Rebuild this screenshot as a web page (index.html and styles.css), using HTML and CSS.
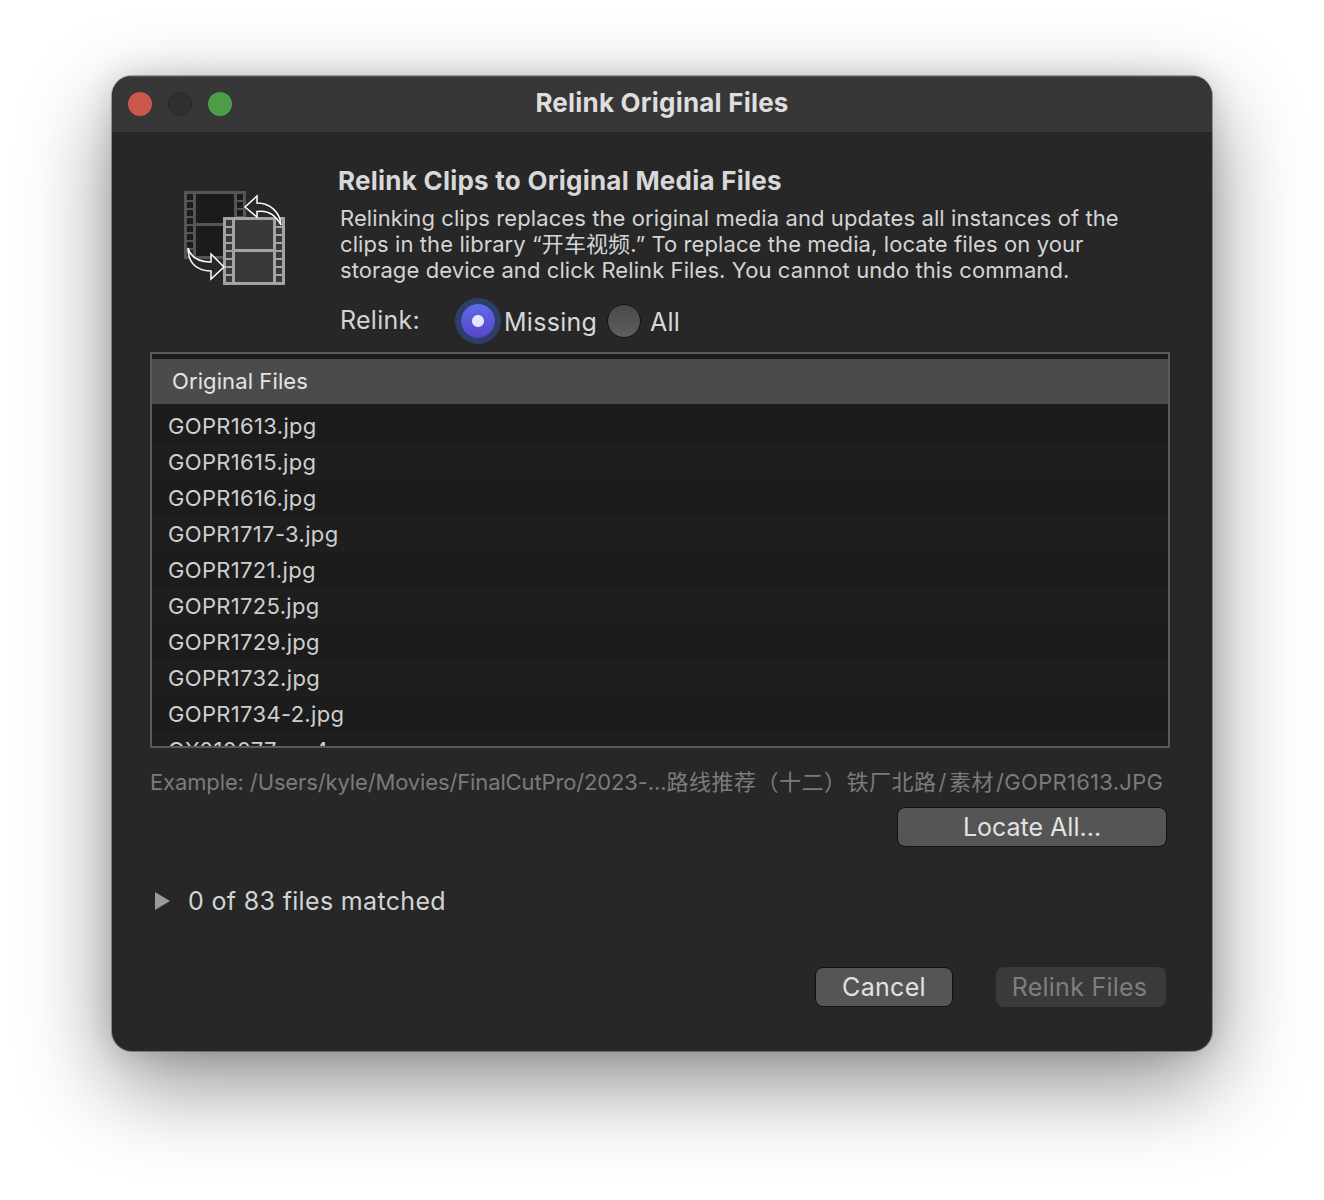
FILE: index.html
```html
<!DOCTYPE html>
<html lang="en">
<head>
  <meta charset="UTF-8" />
  <title>Relink Original Files</title>
  <link rel="stylesheet" href="styles.css">
</head>
<body>
  <div class="window">
    <header class="titlebar">
      <div class="lights">
        <span class="light red"></span>
        <span class="light off"></span>
        <span class="light green"></span>
      </div>
      <h1>Relink Original Files</h1>
    </header>

    <main class="content">
      <section class="intro">
        <svg class="film-icon" width="110" height="100" viewBox="0 0 110 100" fill="none">
          <!-- back strip -->
          <rect x="5.500" y="4.500" width="59" height="65" fill="#1b1b1b" stroke="#555" stroke-width="3"/>
          <path d="M14.500 4v66M55.500 4v66M16 36.500h38" stroke="#555" stroke-width="3"/>
          <path d="M7 13h6M7 21h6M7 29h6M7 37h6M7 45h6M7 53h6M7 61h6M57 13h6M57 21h6M57 29h6M57 37h6" stroke="#555" stroke-width="2"/>
          <!-- front strip -->
          <rect x="44.500" y="30.500" width="59" height="65" fill="#393939" stroke="#a3a3a3" stroke-width="3"/>
          <path d="M53.500 30v66M94.500 30v66M55 62.500h38" stroke="#a3a3a3" stroke-width="3"/>
          <path d="M46 39h6M46 47h6M46 55h6M46 63h6M46 71h6M46 79h6M46 87h6M96 39h6M96 47h6M96 55h6M96 63h6M96 71h6M96 79h6M96 87h6" stroke="#a3a3a3" stroke-width="2"/>
          <!-- arrows -->
          <path d="M101 37C100 24 90 15 77 15V8L65 19L77 29V23.500C86 22 95 26 101 37Z" fill="#282828" stroke="#fff" stroke-width="1.500"/>
          <path d="M8 60C11 70 20 74 31 74V66L44 79L31 91V83C18 83 8 76 8 60Z" fill="#282828" stroke="#fff" stroke-width="1.500"/>
        </svg>
        <div class="intro-text">
          <h2>Relink Clips to Original Media Files</h2>
          <p>Relinking clips replaces the original media and updates all instances of the<br>clips in the library “开车视频.” To replace the media, locate files on your<br>storage device and click Relink Files. You cannot undo this command.</p>
          <div class="relink-row">
            <span class="relink-label">Relink:</span>
            <span class="radio checked"></span>
            <span class="radio-label missing">Missing</span>
            <span class="radio"></span>
            <span class="radio-label">All</span>
          </div>
        </div>
      </section>

      <section class="file-list">
        <div class="list-head">Original Files</div>
        <ul>
          <li>GOPR1613.jpg</li>
          <li>GOPR1615.jpg</li>
          <li>GOPR1616.jpg</li>
          <li>GOPR1717-3.jpg</li>
          <li>GOPR1721.jpg</li>
          <li>GOPR1725.jpg</li>
          <li>GOPR1729.jpg</li>
          <li>GOPR1732.jpg</li>
          <li>GOPR1734-2.jpg</li>
          <li>GX010077.mp4</li>
        </ul>
      </section>

      <p class="example">Example: /Users/kyle/Movies/FinalCutPro/2023-...<span class="cjk">路线推荐（十二）铁厂北路<span class="slash">/</span>素材<span class="slash">/</span></span><span class="file">GOPR1613.JPG</span></p>

      <div class="locate-row">
        <button class="btn locate">Locate All...</button>
      </div>

      <div class="matched">
        <span class="triangle"></span>
        <span>0 of 83 files matched</span>
      </div>

      <div class="actions">
        <button class="btn cancel">Cancel</button>
        <button class="btn relink" disabled>Relink Files</button>
      </div>
    </main>
  </div>
</body>
</html>
```
FILE: styles.css
```css
* {
  box-sizing: border-box;
}

body {
  margin: 0;
  height: 1200px;
  padding: 76px 112px 0;
  background-color: #ffffff;
  font-family: 'Inter', 'Noto Sans CJK SC', sans-serif;
  color: #dcdcdc;
  overflow: hidden;
}

.window {
  width: 1100px;
  height: 975px;
  border-radius: 20px;
  background-color: #272727;
  overflow: hidden;
  box-shadow: 0 32px 90px rgba(0, 0, 0, 0.45), 0 0 30px rgba(0, 0, 0, 0.14), 0 0 0 1px rgba(0, 0, 0, 0.3);
}

.titlebar {
  position: relative;
  height: 56px;
  padding-bottom: 4px;
  background-color: #373737;
  display: flex;
  align-items: center;
  justify-content: center;
  border-top: 1px solid #555;
}

.titlebar h1 {
  margin: 0;
  font-size: 26px;
  font-weight: 700;
  letter-spacing: 0.2px;
  color: #dedede;
}

.lights {
  position: absolute;
  left: 16px;
  top: 15px;
  display: flex;
  gap: 16px;
}

.light {
  width: 24px;
  height: 24px;
  border-radius: 50%;
}

.light.red { background-color: #c9594c; }
.light.off { background-color: #2f2f2f; border: 1px solid #2a2a2a; }
.light.green { background-color: #4d9c48; }

.content {
  padding: 0 42px 0 38px;
}

.intro {
  display: flex;
  height: 220px;
}

.film-icon {
  margin: 56px 0 0 30px;
  flex: none;
}

.intro-text {
  margin-left: 48px;
  padding-top: 33px;
}

.intro-text h2 {
  margin: 0;
  font-size: 26px;
  line-height: 32px;
  font-weight: 700;
  letter-spacing: 0.24px;
  color: #d8d8d8;
}

.intro-text p {
  margin: 8px 0 0 2px;
  font-size: 22px;
  line-height: 26px;
  letter-spacing: 0.09px;
  color: #d4d4d4;
}

.relink-row {
  display: flex;
  align-items: center;
  margin: 18px 0 0 2px;
  height: 40px;
  font-size: 25px;
  letter-spacing: 0.28px;
}

.relink-label {
  width: 121px;
  color: #d4d4d4;
  margin-top: -2px;
}

.radio {
  width: 34px;
  height: 34px;
  border-radius: 50%;
  background: linear-gradient(#4a4a4a, #5e5e5e);
  border: 1px solid #141414;
  flex: none;
}

.radio.checked {
  background: radial-gradient(circle, #e6e2ff 0 5.500px, transparent 6.500px), linear-gradient(#5f6ae8, #5645c9);
  border: none;
  box-shadow: 0 0 0 6px #2d3f68;
}

.radio-label {
  margin-left: 9px;
  margin-top: 2px;
  color: #d8d8d8;
}

.radio-label.missing {
  margin-left: 9px;
  width: 103px;
}

.file-list {
  height: 396px;
  width: 1020px;
  border: 2px solid #5a5a5a;
  background-color: #1c1c1c;
  padding-top: 5px;
  overflow: hidden;
}

.list-head {
  height: 45px;
  padding-left: 20px;
  background-color: #4b4b4b;
  font-size: 22px;
  line-height: 45px;
  letter-spacing: 0.1px;
  color: #e4e4e4;
}

.file-list ul {
  list-style: none;
  margin: 4px 0 0;
  padding: 0;
}

.file-list li {
  height: 36px;
  padding-left: 16px;
  font-size: 22px;
  line-height: 36px;
  letter-spacing: 0.33px;
  color: #cfcfcf;
}

.file-list li:nth-child(even) {
  background-color: #1e1e1e;
}

.example {
  margin: 20px 0 0;
  font-size: 22px;
  line-height: 28px;
  letter-spacing: -0.13px;
  white-space: nowrap;
  color: #7b7b7b;
}

.example .cjk {
  letter-spacing: 0.5px;
}

.example .slash {
  margin: 0 2px;
}

.example .file {
  margin-left: -2px;
  letter-spacing: 0.28px;
}

.btn {
  font-family: inherit;
  font-size: 25px;
  height: 40px;
  padding: 0;
  border-radius: 8px;
  border: 1px solid #111;
  background-color: #555;
  color: #e2e2e2;
}

.locate-row {
  display: flex;
  justify-content: flex-end;
  margin: 11px 3px 0 0;
}

.locate {
  width: 270px;
}

.matched {
  display: flex;
  align-items: center;
  margin-top: 36px;
  height: 36px;
  font-size: 25px;
  letter-spacing: 0.33px;
  color: #d4d4d4;
}

.triangle {
  width: 0;
  height: 0;
  margin: 0 18px 0 5px;
  border-left: 15px solid #9a9a9a;
  border-top: 9px solid transparent;
  border-bottom: 9px solid transparent;
}

.actions {
  display: flex;
  justify-content: flex-end;
  gap: 43px;
  margin: 48px 4px 0 0;
}

.cancel {
  width: 138px;
  letter-spacing: 0.3px;
}

.relink {
  width: 170px;
  padding-right: 3px;
  border: none;
  background-color: #3a3a3a;
  color: #7e7e7e;
  letter-spacing: 0.25px;
}
```
